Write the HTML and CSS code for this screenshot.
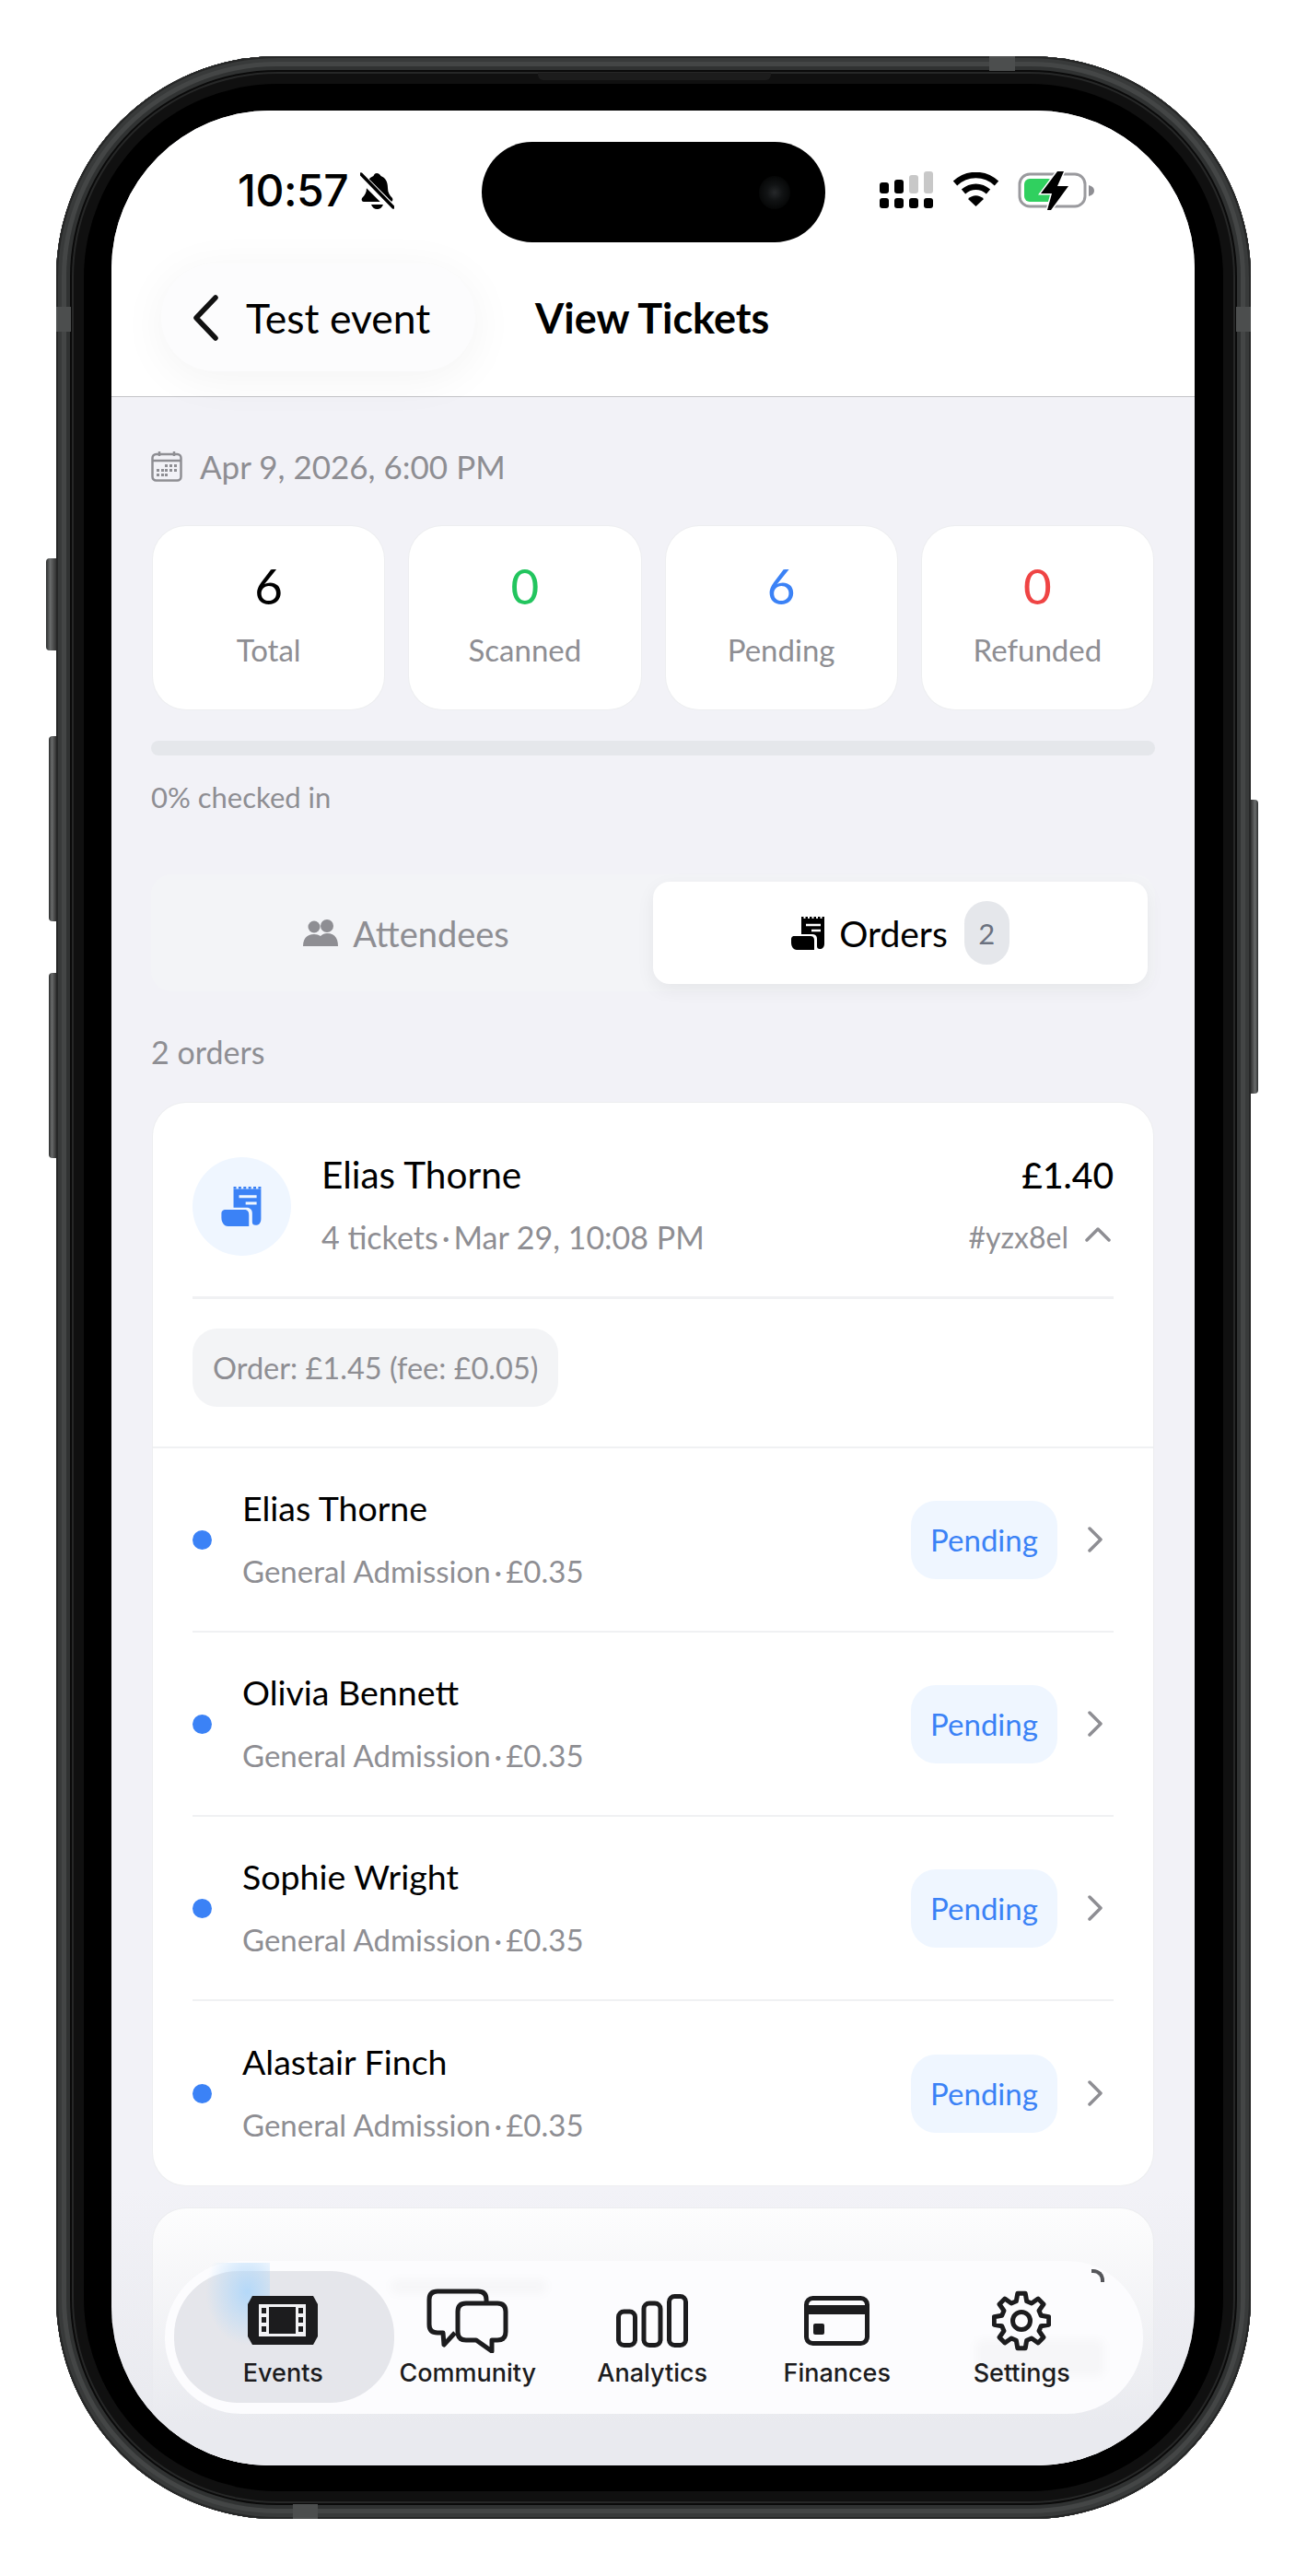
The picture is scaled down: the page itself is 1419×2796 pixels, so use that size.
FILE: index.html
```html
<!DOCTYPE html>
<html lang="en">
  <head>
    <meta charset="UTF-8" />
    <title>View Tickets</title>
    <link rel="stylesheet" href="styles.css">
  </head>
  <body>
    <div class="phone">
      <div class="side-btn mute"></div>
      <div class="side-btn vol-up"></div>
      <div class="side-btn vol-down"></div>
      <div class="side-btn power"></div>
      <div class="band band-top"></div>
      <div class="band band-bottom"></div>
      <div class="band band-left"></div>
      <div class="band band-right"></div>
      <div class="speaker"></div>

      <div class="screen">
        <div class="island"><div class="camera"></div></div>

        <header class="top">
          <div class="status">
            <div class="status-left">
              <span class="time">10:57</span>
              <svg class="bell" viewBox="0 0 37 41">
                <path d="M18 1c-2 0-3 1.500-3.500 3C9 6 7 11 7 17c0 5-2 8-5 11-1 2 0 4 2 4h29c2 0 3-2 2-4-3-3-5-6-5-11 0-6-2-11-7.500-13C22 2.500 20 1 18 1z" fill="#000"/>
                <path d="M12 35c1 3 3.500 5 6.500 5s5.500-2 6.500-5z" fill="#000"/>
                <path d="M1 5l35 35" stroke="#fff" stroke-width="9"/>
                <path d="M1 2l35 36" stroke="#000" stroke-width="3.500" stroke-linecap="round"/>
              </svg>
            </div>
            <div class="status-right">
              <svg class="signal" viewBox="0 0 60 41">
                <rect x="1" y="12" width="10" height="12" rx="3" fill="#000"/>
                <rect x="17" y="9" width="10" height="15" rx="3" fill="#000"/>
                <rect x="33" y="4" width="10" height="20" rx="3" fill="#c8c8c8"/>
                <rect x="49" y="0" width="10" height="24" rx="3" fill="#c8c8c8"/>
                <rect x="1" y="29" width="10" height="11" rx="3" fill="#000"/>
                <rect x="17" y="29" width="10" height="11" rx="3" fill="#000"/>
                <rect x="33" y="29" width="10" height="11" rx="3" fill="#000"/>
                <rect x="49" y="29" width="10" height="11" rx="3" fill="#000"/>
              </svg>
              <svg class="wifi" viewBox="0 0 51 37">
                <path d="M3 12C16 0 35 0 48 12" fill="none" stroke="#000" stroke-width="6.500"/>
                <path d="M12 21c8-7 19-7 27 0" fill="none" stroke="#000" stroke-width="6.500"/>
                <path d="M17 29c5-5 12-5 17 0l-8.500 8z" fill="#000"/>
              </svg>
              <svg class="battery" viewBox="0 0 84 42">
                <rect x="2" y="3" width="71" height="35" rx="11" fill="none" stroke="#9a9a9e" stroke-width="3"/>
                <rect x="7" y="8" width="32" height="25" rx="6" fill="#30d05f"/>
                <path d="M77 15c4 1 6 3 6 6s-2 5-6 6z" fill="#8e8e93"/>
                <path d="M43 0L25 24h12l-5 18 4 0 19-26H43L50 0z" fill="#000" stroke="#fff" stroke-width="3" paint-order="stroke"/>
              </svg>
            </div>
          </div>
          <div class="nav">
            <div class="back">
              <svg class="back-icon" viewBox="0 0 30 50"><path d="M26 3L5 25l21 22" fill="none" stroke="#111" stroke-width="5.500" stroke-linecap="round" stroke-linejoin="round"/></svg>
              <span>Test event</span>
            </div>
            <h1 class="title">View Tickets</h1>
          </div>
        </header>

        <main class="content">
          <div class="date-row">
            <svg class="cal" viewBox="0 0 34 34">
              <rect x="1.500" y="4" width="31" height="28.500" rx="4" fill="none" stroke="#8e8e93" stroke-width="2.500"/>
              <path d="M2 11h30M9 1v5M25 1v5" stroke="#8e8e93" stroke-width="2.500"/>
              <g fill="#8e8e93">
                <rect x="15" y="15" width="3" height="3"/><rect x="20" y="15" width="3" height="3"/><rect x="25" y="15" width="3" height="3"/>
                <rect x="6" y="20" width="3" height="3"/><rect x="11" y="20" width="3" height="3"/><rect x="15" y="20" width="3" height="3"/><rect x="20" y="20" width="3" height="3"/><rect x="25" y="20" width="3" height="3"/>
                <rect x="6" y="25" width="3" height="3"/><rect x="11" y="25" width="3" height="3"/><rect x="15" y="25" width="3" height="3"/>
              </g>
            </svg>
            <span>Apr 9, 2026, 6:00 PM</span>
          </div>

          <div class="stats">
            <div class="stat"><div class="num">6</div><div class="lbl">Total</div></div>
            <div class="stat"><div class="num green">0</div><div class="lbl">Scanned</div></div>
            <div class="stat"><div class="num blue">6</div><div class="lbl">Pending</div></div>
            <div class="stat"><div class="num red">0</div><div class="lbl">Refunded</div></div>
          </div>

          <div class="progress"></div>
          <div class="checked">0% checked in</div>

          <div class="tabs">
            <div class="tab">
              <svg class="tab-icon" viewBox="0 0 40 30">
                <circle cx="13" cy="8" r="6.500" fill="#8e8e93"/>
                <circle cx="27" cy="7" r="7" fill="#8e8e93"/>
                <path d="M1 29c0-9 5-13 12-13 3 0 5 .7 7 2 2-2 4.500-3 7-3 8 0 12 5 12 14z" fill="#8e8e93"/>
              </svg>
              <span>Attendees</span>
            </div>
            <div class="tab active">
              <svg class="tab-icon receipt" viewBox="0 0 37 36">
                <path d="M11 2h25v27c0 4-2 6-5 6-2 0-3-1-3-3v-8c0-3-2-5-5-5H11z" fill="#000"/>
                <path d="M11 1h25" stroke="#000" stroke-width="2" stroke-dasharray="2.500 2" fill="none"/>
                <path d="M0 24c0-2 2-3 3-3h18c3 0 4 2 4 5v10H6c-4 0-6-4-6-8z" fill="#000"/>
                <path d="M16 9h16M22 15h10" stroke="#fff" stroke-width="2.500"/>
              </svg>
              <span>Orders</span>
              <span class="count">2</span>
            </div>
          </div>

          <div class="orders-label">2 orders</div>

          <section class="card">
            <div class="order-head">
              <div class="avatar">
                <svg viewBox="0 0 37 36">
                  <path d="M11 2h25v27c0 4-2 6-5 6-2 0-3-1-3-3v-8c0-3-2-5-5-5H11z" fill="#3b82f6"/>
                  <path d="M11 1h25" stroke="#3b82f6" stroke-width="2" stroke-dasharray="2.500 2" fill="none"/>
                  <path d="M0 24c0-2 2-3 3-3h18c3 0 4 2 4 5v10H6c-4 0-6-4-6-8z" fill="#3b82f6"/>
                  <path d="M16 9h16M22 15h10" stroke="#eff6ff" stroke-width="2.500"/>
                </svg>
              </div>
              <div class="order-info">
                <div class="name head-name">Elias Thorne</div>
                <div class="sub">4 tickets<span class="sep">·</span>Mar 29, 10:08 PM</div>
              </div>
              <div class="order-side">
                <div class="amount">£1.40</div>
                <div class="ref">
                  <span>#yzx8el</span>
                  <svg class="up" viewBox="0 0 28 16"><path d="M2 14L14 2l12 12" fill="none" stroke="#8e8e93" stroke-width="3.500" stroke-linecap="round" stroke-linejoin="round"/></svg>
                </div>
              </div>
            </div>
            <div class="fee-wrap">
              <div class="fee">Order: £1.45 (fee: £0.05)</div>
            </div>

            <div class="row">
              <div class="dot"></div>
              <div class="row-text">
                <div class="name">Elias Thorne</div>
                <div class="sub small">General Admission<span class="sep">·</span>£0.35</div>
              </div>
              <div class="pill">Pending</div>
              <svg class="chev" viewBox="0 0 16 28"><path d="M2 2l12 12L2 26" fill="none" stroke="#8e8e93" stroke-width="3.500" stroke-linecap="round" stroke-linejoin="round"/></svg>
            </div>
            <div class="row">
              <div class="dot"></div>
              <div class="row-text">
                <div class="name">Olivia Bennett</div>
                <div class="sub small">General Admission<span class="sep">·</span>£0.35</div>
              </div>
              <div class="pill">Pending</div>
              <svg class="chev" viewBox="0 0 16 28"><path d="M2 2l12 12L2 26" fill="none" stroke="#8e8e93" stroke-width="3.500" stroke-linecap="round" stroke-linejoin="round"/></svg>
            </div>
            <div class="row">
              <div class="dot"></div>
              <div class="row-text">
                <div class="name">Sophie Wright</div>
                <div class="sub small">General Admission<span class="sep">·</span>£0.35</div>
              </div>
              <div class="pill">Pending</div>
              <svg class="chev" viewBox="0 0 16 28"><path d="M2 2l12 12L2 26" fill="none" stroke="#8e8e93" stroke-width="3.500" stroke-linecap="round" stroke-linejoin="round"/></svg>
            </div>
            <div class="row">
              <div class="dot"></div>
              <div class="row-text">
                <div class="name">Alastair Finch</div>
                <div class="sub small">General Admission<span class="sep">·</span>£0.35</div>
              </div>
              <div class="pill">Pending</div>
              <svg class="chev" viewBox="0 0 16 28"><path d="M2 2l12 12L2 26" fill="none" stroke="#8e8e93" stroke-width="3.500" stroke-linecap="round" stroke-linejoin="round"/></svg>
            </div>
          </section>

          <section class="card next-card"></section>
        </main>

        <div class="fade"></div>

        <nav class="tabbar">
          <div class="tab-active-bg"></div>
          <div class="smudge"></div>
          <div class="ghost ghost-a"></div>
          <div class="ghost ghost-b"></div>
          <div class="ghost-arc"></div>
          <div class="item">
            <svg class="ico" style="width:76px" viewBox="0 0 76 70">
              <g transform="translate(0 8)">
                <path d="M5 0h66l5 9v35l-5 9H5l-5-9V9z" fill="#1c1c1e"/>
                <rect x="12" y="9" width="51" height="35" fill="#f2f2f5"/>
                <rect x="23" y="12" width="29" height="29" fill="#1c1c1e"/>
                <g fill="#1c1c1e">
                  <rect x="15" y="13" width="5" height="6"/><rect x="15" y="23" width="5" height="6"/><rect x="15" y="33" width="5" height="6"/>
                  <rect x="55" y="13" width="5" height="6"/><rect x="55" y="23" width="5" height="6"/><rect x="55" y="33" width="5" height="6"/>
                </g>
              </g>
            </svg>
            <span>Events</span>
          </div>
          <div class="item">
            <svg class="ico" style="width:90px" viewBox="0 0 90 70">
              <path d="M31 48L19 61l-1-13h-6c-6 0-9-3-9-9V12c0-6 3-9 9-9h44c6 0 9 3 9 9v4" fill="none" stroke="#1c1c1e" stroke-width="5" stroke-linejoin="round"/>
              <path d="M43 16h34c6 0 9 3 9 9v22c0 6-3 9-9 9h-6v12L54 56H43c-6 0-9-3-9-9V25c0-6 3-9 9-9z" fill="none" stroke="#1c1c1e" stroke-width="5" stroke-linejoin="round"/>
            </svg>
            <span>Community</span>
          </div>
          <div class="item">
            <svg class="ico" style="width:78px" viewBox="0 0 78 70">
              <g transform="translate(0 6)">
                <rect x="2.500" y="19" width="18" height="36.500" rx="6" fill="none" stroke="#1c1c1e" stroke-width="5"/>
                <rect x="30" y="10" width="18" height="45.500" rx="6" fill="none" stroke="#1c1c1e" stroke-width="5"/>
                <rect x="57.500" y="2.500" width="18" height="53" rx="6" fill="none" stroke="#1c1c1e" stroke-width="5"/>
              </g>
            </svg>
            <span>Analytics</span>
          </div>
          <div class="item">
            <svg class="ico" style="width:71px" viewBox="0 0 71 70">
              <g transform="translate(0 8)">
                <rect x="2.500" y="2.500" width="66" height="49" rx="7" fill="none" stroke="#1c1c1e" stroke-width="5"/>
                <path d="M2 15h67" stroke="#1c1c1e" stroke-width="10"/>
                <rect x="10" y="30" width="12" height="12" rx="2" fill="#1c1c1e"/>
              </g>
            </svg>
            <span>Finances</span>
          </div>
          <div class="item">
            <svg class="ico" style="width:64px" viewBox="0 0 64 70">
              <g transform="translate(0 3)">
                <path d="M26.310 10.750L27.820 2.300H36.180L37.690 10.750L43 12.950L50.040 8.040L55.960 13.960L51.050 21L53.250 26.310L61.700 27.820V36.180L53.250 37.690L51.050 43L55.960 50.040L50.040 55.960L43 51.050L37.690 53.250L36.180 61.700H27.820L26.310 53.250L21 51.050L13.960 55.960L8.040 50.040L12.950 43L10.750 37.690L2.300 36.180V27.820L10.750 26.310L12.950 21L8.040 13.960L13.960 8.040L21 12.950z" fill="none" stroke="#1c1c1e" stroke-width="5" stroke-linejoin="round"/>
                <circle cx="32" cy="32" r="9.500" fill="none" stroke="#1c1c1e" stroke-width="5"/>
              </g>
            </svg>
            <span>Settings</span>
          </div>
        </nav>
      </div>
    </div>
  </body>
</html>
```
FILE: styles.css
```css
* {
  box-sizing: border-box;
}
body {
  margin: 0;
  background: #fff;
  font-family: "Lato", "Noto Sans", sans-serif;
  color: #000;
}

/* phone shell */
.phone {
  position: relative;
  width: 1297px;
  height: 2673px;
  margin: 61px 0 0 61px;
  padding: 59px 61px 58px 60px;
  background: #000;
  border-radius: 240px;
  box-shadow: inset 0 0 0 2px #262727, inset 0 0 0 6px #383a3a, inset 0 0 0 11px #444646, inset 0 0 0 15px #303232, inset 0 0 0 17px #0a0a0a, inset 0 0 0 19px #262727, inset 0 0 0 30px #101010;
}
.side-btn {
  position: absolute;
  background: linear-gradient(to right, #2a2c2c, #6a6c6c 40%, #333);
  border-radius: 4px 0 0 4px;
}
.mute { left: -11px; top: 545px; width: 11px; height: 100px; }
.vol-up { left: -8px; top: 738px; width: 8px; height: 201px; }
.vol-down { left: -8px; top: 995px; width: 8px; height: 201px; }
.power { right: -8px; top: 807px; width: 8px; height: 319px; border-radius: 0 4px 4px 0; background: linear-gradient(to left, #2a2c2c, #6a6c6c 40%, #333); }
.band {
  position: absolute;
  background: #4c4e4e;
}
.band-top { left: 1013px; top: 0; width: 28px; height: 16px; }
.band-bottom { left: 257px; bottom: 0; width: 27px; height: 16px; }
.band-left { left: 0; top: 272px; width: 16px; height: 27px; }
.band-right { right: 0; top: 272px; width: 16px; height: 27px; }
.speaker {
  position: absolute;
  left: 523px;
  top: 18px;
  width: 253px;
  height: 8px;
  background: #1c1c1c;
  border-radius: 0 0 6px 6px;
}

.screen {
  position: relative;
  width: 1176px;
  height: 2556px;
  overflow: hidden;
  background: #f2f2f7;
  border-radius: 172px;
}
.island {
  position: absolute;
  left: 402px;
  top: 34px;
  width: 373px;
  height: 109px;
  background: #000;
  border-radius: 55px;
  z-index: 3;
}
.camera {
  position: absolute;
  right: 38px;
  top: 37px;
  width: 34px;
  height: 36px;
  border-radius: 50%;
  background: radial-gradient(circle, #26282a 0, #111314 35%, #060707 70%, #000 100%);
}

/* header */
.top {
  height: 311px;
  background: #fff;
  border-bottom: 1px solid #c4c4c8;
}
.status {
  display: flex;
  justify-content: space-between;
  height: 166px;
  padding: 64px 108px 0 137px;
}
.status-left {
  display: flex;
  align-items: flex-start;
  gap: 13px;
}
.time {
  font-family: "Inter", sans-serif;
  font-weight: 500;
  font-size: 48px;
  line-height: 46px;
  letter-spacing: -0.5px;
}
.bell {
  width: 37px;
  height: 41px;
  margin-top: 3px;
}
.status-right {
  display: flex;
  align-items: flex-start;
  gap: 20px;
}
.signal {
  width: 60px;
  height: 41px;
  margin-top: 2px;
}
.wifi {
  width: 51px;
  height: 37px;
  margin-top: 3px;
}
.battery {
  width: 84px;
  height: 42px;
  margin-top: 2px;
}
.nav {
  display: flex;
  align-items: center;
  gap: 65px;
  padding-left: 54px;
}
.back {
  display: flex;
  align-items: center;
  gap: 29px;
  width: 341px;
  height: 117px;
  padding-left: 33px;
  background: #fcfcfd;
  border-radius: 58px;
  box-shadow: 0 8px 50px rgba(0, 0, 0, 0.05);
  font-size: 44.500px;
}
.back-icon {
  width: 30px;
  height: 50px;
}
.title {
  margin: 0;
  font-size: 45px;
  font-weight: 700;
}

/* main */
.content {
  padding: 55px 43px 0;
}
.date-row {
  display: flex;
  align-items: center;
  gap: 19px;
  height: 40px;
  color: #8e8e93;
  font-size: 35px;
}
.cal {
  width: 34px;
  height: 34px;
}
.stats {
  display: grid;
  grid-template-columns: repeat(4, 1fr);
  gap: 27px;
  margin: 45px 2px 0;
}
.stat {
  height: 199px;
  padding-top: 36px;
  text-align: center;
  background: #fff;
  border-radius: 36px;
  box-shadow: 0 0 0 1px #edeef0;
}
.num {
  font-size: 53px;
  line-height: 58px;
}
.lbl {
  margin-top: 20px;
  font-size: 33px;
  line-height: 40px;
  color: #8e8e93;
}
.green { color: #22c55e; }
.blue { color: #3b82f6; }
.red { color: #ef4444; }
.progress {
  height: 16px;
  margin-top: 34px;
  background: #e5e7eb;
  border-radius: 8px;
}
.checked {
  margin-top: 25px;
  font-size: 31px;
  line-height: 40px;
  color: #8e8e93;
}
.tabs {
  display: grid;
  grid-template-columns: 1fr 1fr;
  height: 127px;
  margin-top: 64px;
  padding: 8px;
  background: #f3f4f7;
  border-radius: 22px;
}
.tab {
  display: flex;
  align-items: center;
  justify-content: center;
  gap: 15px;
  font-size: 38px;
  color: #8e8e93;
}
.tab.active {
  color: #000;
  background: #fff;
  border-radius: 18px;
  box-shadow: 0 6px 20px rgba(0, 0, 0, 0.06);
  font-size: 39px;
}
.tab-icon {
  width: 40px;
  height: 30px;
}
.tab-icon.receipt {
  width: 37px;
  height: 36px;
}
.count {
  display: flex;
  align-items: center;
  justify-content: center;
  width: 49px;
  height: 69px;
  margin-left: 3px;
  font-size: 31px;
  color: #6b7280;
  background: #e5e7eb;
  border-radius: 25px;
}
.orders-label {
  margin-top: 46px;
  font-size: 34px;
  line-height: 40px;
  color: #8e8e93;
}

/* order card */
.card {
  margin: 35px 2px 0;
  background: #fff;
  border-radius: 36px;
  box-shadow: 0 0 0 1px #edeef0;
}
.order-head {
  display: flex;
  align-items: center;
  gap: 33px;
  margin: 0 43px;
  padding: 56px 0 42px;
  border-bottom: 3px solid #f0f1f3;
}
.avatar {
  display: flex;
  align-items: center;
  justify-content: center;
  width: 107px;
  height: 107px;
  background: #eff6ff;
  border-radius: 50%;
}
.avatar svg {
  width: 45px;
  height: 43px;
}
.order-info {
  flex: 1;
}
.name {
  font-size: 37.500px;
  line-height: 44px;
}
.head-name {
  font-size: 40.500px;
}
.sub {
  margin-top: 24px;
  font-size: 34px;
  line-height: 44px;
  color: #8e8e93;
}
.sub.small {
  font-size: 33px;
}
.sep {
  margin: 0 4px;
}
.order-side {
  text-align: right;
}
.amount {
  font-size: 39px;
  font-weight: 500;
  line-height: 44px;
}
.ref {
  display: flex;
  align-items: center;
  justify-content: flex-end;
  gap: 18px;
  margin-top: 24px;
  font-size: 32px;
  line-height: 44px;
  color: #8e8e93;
}
.up {
  width: 28px;
  height: 16px;
  margin-right: 3px;
  margin-top: -6px;
}
.fee-wrap {
  padding: 32px 43px 43px;
  border-bottom: 2px solid #f0f1f3;
}
.fee {
  display: inline-flex;
  align-items: center;
  height: 85px;
  padding: 0 22px;
  font-size: 32.500px;
  color: #8e8e93;
  background: #f3f4f6;
  border-radius: 27px;
}
.row {
  display: flex;
  align-items: center;
  height: 200px;
  margin: 0 43px;
  padding-right: 12px;
  border-bottom: 2px solid #f0f1f3;
}
.row:last-child {
  border-bottom: 0;
}
.dot {
  width: 21px;
  height: 21px;
  margin-right: 33px;
  background: #3b82f6;
  border-radius: 50%;
}
.row-text {
  flex: 1;
}
.pill {
  display: flex;
  align-items: center;
  justify-content: center;
  width: 159px;
  height: 85px;
  font-size: 33px;
  color: #3b82f6;
  background: #eff6ff;
  border-radius: 27px;
}
.chev {
  width: 16px;
  height: 28px;
  margin-left: 33px;
}
.next-card {
  height: 400px;
  margin-top: 25px;
}

/* bottom bar */
.fade {
  position: absolute;
  left: 0;
  right: 0;
  bottom: 0;
  height: 300px;
  background: linear-gradient(to bottom, rgba(232, 233, 238, 0), rgba(232, 233, 238, 0.3) 25%, #e9eaef 85%);
}
.tabbar {
  position: absolute;
  left: 58px;
  top: 2334px;
  display: grid;
  grid-template-columns: repeat(5, 200.500px);
  width: 1062px;
  height: 166px;
  padding-left: 28px;
  background: #fcfcfe;
  border-radius: 83px;
}
.tab-active-bg {
  position: absolute;
  left: 10px;
  top: 11px;
  width: 239px;
  height: 143px;
  background: #e5e6eb;
  border-radius: 70px;
}
.smudge {
  position: absolute;
  left: 44px;
  top: 2px;
  width: 70px;
  height: 90px;
  background: radial-gradient(ellipse at 65% 35%, rgba(175, 215, 250, 0.9), rgba(190, 225, 250, 0) 70%);
}
.ghost {
  position: absolute;
  height: 16px;
  background: rgba(0, 0, 0, 0.025);
  border-radius: 8px;
  filter: blur(5px);
}
.ghost-a {
  left: 245px;
  top: 20px;
  width: 170px;
}
.ghost-b {
  left: 880px;
  top: 85px;
  width: 140px;
  height: 40px;
}
.ghost-arc {
  position: absolute;
  right: 42px;
  top: 9px;
  width: 14px;
  height: 14px;
  border-top: 4px solid #55565a;
  border-right: 4px solid #55565a;
  border-radius: 0 12px 0 0;
}
.item {
  position: relative;
  display: flex;
  flex-direction: column;
  align-items: center;
  font-family: "Inter", sans-serif;
  font-weight: 500;
  font-size: 27px;
  color: #1c1c1e;
}
.ico {
  height: 70px;
  margin-top: 30px;
  margin-bottom: 5px;
}
```
